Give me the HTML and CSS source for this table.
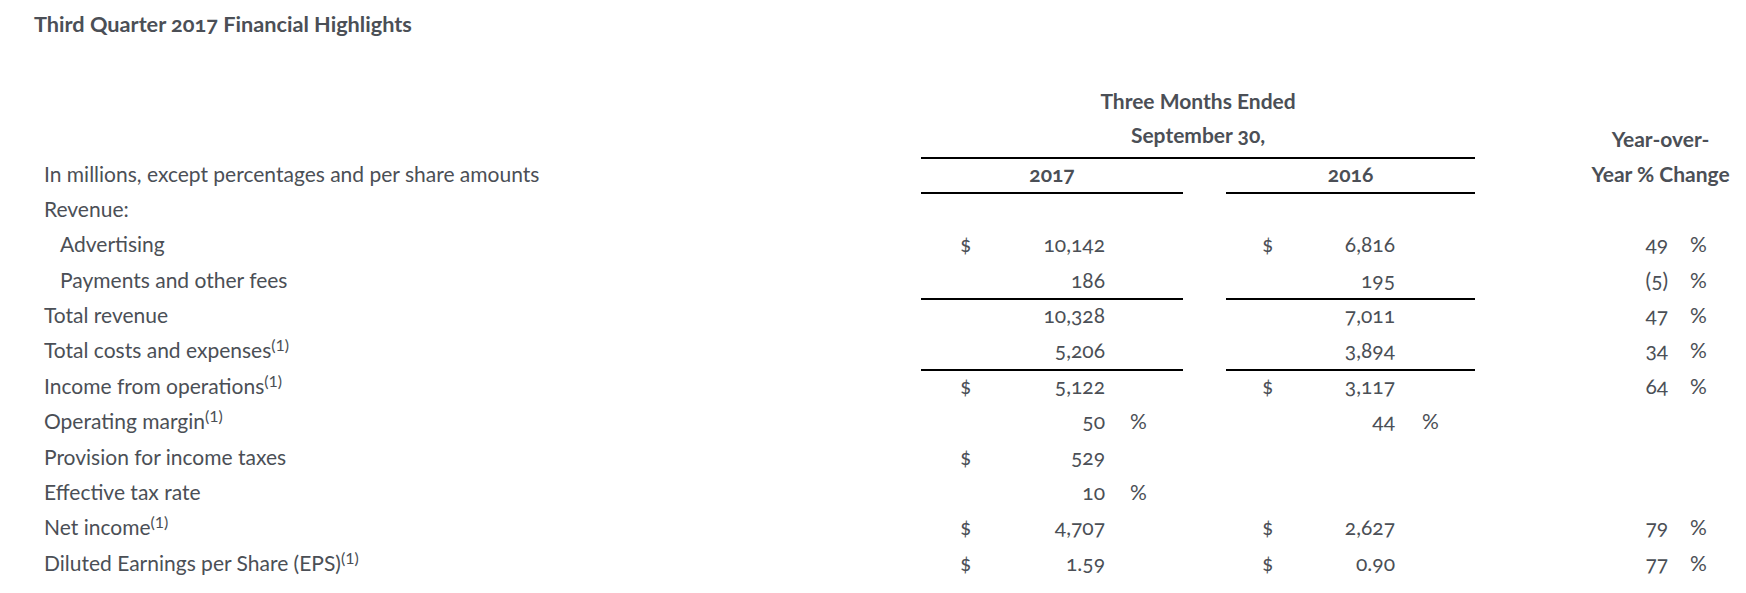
FILE: index.html
```html
<!DOCTYPE html>
<html lang="en">
<head>
<meta charset="utf-8">
<title>Third Quarter 2017 Financial Highlights</title>
<link rel="stylesheet" href="styles.css">
</head>
<body>
<h1 class="title">Third Quarter 2017 Financial Highlights</h1>
<table class="fin">
  <colgroup>
    <col class="c-label"><col class="c-d17"><col class="c-n17"><col class="c-p17"><col class="c-gap1">
    <col class="c-d16"><col class="c-n16"><col class="c-p16"><col class="c-gap2"><col class="c-ny"><col class="c-py">
  </colgroup>
  <tr class="hdr hdr-a">
    <td></td><td colspan="7" class="ctr">Three Months Ended</td><td></td><td colspan="2"></td>
  </tr>
  <tr class="hdr hdr-b">
    <td></td><td colspan="7" class="ctr ul">September 30,</td><td></td><td colspan="2" class="ctr yoy1">Year-over-</td>
  </tr>
  <tr class="hdr">
    <td class="lbl reg">In millions, except percentages and per share amounts</td>
    <td colspan="3" class="ctr ul">2017</td><td></td><td colspan="3" class="ctr ul">2016</td><td></td>
    <td colspan="2" class="ctr">Year % Change</td>
  </tr>
  <tr>
    <td class="lbl">Revenue:</td><td></td><td></td><td></td><td></td><td></td><td></td><td></td><td></td><td></td><td></td>
  </tr>
  <tr>
    <td class="lbl ind">Advertising</td>
    <td class="d17">$</td><td class="n">10,142</td><td></td><td></td>
    <td class="d16">$</td><td class="n">6,816</td><td></td><td></td>
    <td class="n">49</td><td class="py">%</td>
  </tr>
  <tr>
    <td class="lbl ind">Payments and other fees</td>
    <td class="ul"></td><td class="n ul">186</td><td class="ul"></td><td></td>
    <td class="ul"></td><td class="n ul">195</td><td class="ul"></td><td></td>
    <td class="n">(5)</td><td class="py">%</td>
  </tr>
  <tr>
    <td class="lbl">Total revenue</td>
    <td></td><td class="n">10,328</td><td></td><td></td>
    <td></td><td class="n">7,011</td><td></td><td></td>
    <td class="n">47</td><td class="py">%</td>
  </tr>
  <tr>
    <td class="lbl">Total costs and expenses<sup>(1)</sup></td>
    <td class="ul"></td><td class="n ul">5,206</td><td class="ul"></td><td></td>
    <td class="ul"></td><td class="n ul">3,894</td><td class="ul"></td><td></td>
    <td class="n">34</td><td class="py">%</td>
  </tr>
  <tr>
    <td class="lbl">Income from operations<sup>(1)</sup></td>
    <td class="d17">$</td><td class="n">5,122</td><td></td><td></td>
    <td class="d16">$</td><td class="n">3,117</td><td></td><td></td>
    <td class="n">64</td><td class="py">%</td>
  </tr>
  <tr>
    <td class="lbl">Operating margin<sup>(1)</sup></td>
    <td></td><td class="n">50</td><td class="p17">%</td><td></td>
    <td></td><td class="n">44</td><td class="p16">%</td><td></td>
    <td></td><td></td>
  </tr>
  <tr>
    <td class="lbl">Provision for income taxes</td>
    <td class="d17">$</td><td class="n">529</td><td></td><td></td>
    <td></td><td></td><td></td><td></td>
    <td></td><td></td>
  </tr>
  <tr>
    <td class="lbl">Effective tax rate</td>
    <td></td><td class="n">10</td><td class="p17">%</td><td></td>
    <td></td><td></td><td></td><td></td>
    <td></td><td></td>
  </tr>
  <tr>
    <td class="lbl">Net income<sup>(1)</sup></td>
    <td class="d17">$</td><td class="n">4,707</td><td></td><td></td>
    <td class="d16">$</td><td class="n">2,627</td><td></td><td></td>
    <td class="n">79</td><td class="py">%</td>
  </tr>
  <tr>
    <td class="lbl">Diluted Earnings per Share (EPS)<sup>(1)</sup></td>
    <td class="d17">$</td><td class="n">1.59</td><td></td><td></td>
    <td class="d16">$</td><td class="n">0.90</td><td></td><td></td>
    <td class="n">77</td><td class="py">%</td>
  </tr>
</table>
</body>
</html>
```
FILE: styles.css
```css
html, body {
  margin: 0;
  background: #ffffff;
}
body {
  padding: 0 0 0 34px;
  font-family: Lato, "Open Sans", sans-serif;
  color: #4b4f56;
  font-variant-numeric: oldstyle-nums;
}
.title {
  margin: 0;
  padding-top: 11px;
  font-size: 21.7px;
  line-height: 26px;
  font-weight: 700;
}
.fin {
  margin-top: 49px;
  border-collapse: separate;
  border-spacing: 0;
  table-layout: fixed;
  width: 1699px;
  font-size: 21px;
}
.c-label { width: 887px; }
.c-d17 { width: 69px; }
.c-n17 { width: 115px; }
.c-p17 { width: 78px; }
.c-gap1 { width: 43px; }
.c-d16 { width: 74px; }
.c-n16 { width: 95px; }
.c-p16 { width: 80px; }
.c-gap2 { width: 113px; }
.c-ny { width: 80px; }
.c-py { width: 65px; }

.fin td {
  padding: 0 0 3.4px 0;
  line-height: 30px;
  border-bottom: 2px solid transparent;
  vertical-align: top;
  white-space: nowrap;
}
.fin .hdr td { font-weight: 700; }
.fin .hdr td.reg { font-weight: 400; }
.fin .hdr-a td { padding-bottom: 2px; }
.fin .hdr-b td { padding-bottom: 6.5px; }
.fin .hdr-b td.yoy1 { padding-top: 4px; padding-bottom: 2.5px; }
.fin td.ul { border-bottom-color: #000000; }
.fin td.ctr { text-align: center; }
.fin td.lbl { padding-left: 10px; }
.fin td.ind { padding-left: 26px; }
.fin td.n { text-align: right; }
.fin td.d17 { padding-left: 39px; }
.fin td.d16 { padding-left: 36px; }
.fin td.p17 { padding-left: 25px; }
.fin td.p16 { padding-left: 27px; }
.fin td.py { padding-left: 22px; }
.fin sup {
  font-size: 16px;
  line-height: 0;
  vertical-align: 7px;
  font-variant-numeric: lining-nums;
}
```
